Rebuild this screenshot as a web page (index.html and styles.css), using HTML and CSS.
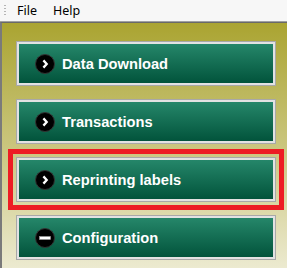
FILE: index.html
```html
<!DOCTYPE html>
<html lang="en">
<head>
    <meta charset="UTF-8">
    <title>Labels</title>
    <link rel="stylesheet" href="styles.css">
</head>
<body>
<div class="menubar">
    <span class="grip"></span>
    <span class="menu-item">File</span>
    <span class="menu-item">Help</span>
</div>

<div class="panel">
    <div class="nav-button">
        <span class="icon">
            <svg width="20" height="20" viewBox="0 0 20 20"><circle cx="10" cy="10" r="9.5" fill="#000" stroke="#333" stroke-width="1"/><path d="M8.4 6.4 L11.7 10 L8.4 13.6" fill="none" stroke="#fff" stroke-width="2.3"/></svg>
        </span>
        <span class="label">Data Download</span>
    </div>
    <div class="nav-button">
        <span class="icon">
            <svg width="20" height="20" viewBox="0 0 20 20"><circle cx="10" cy="10" r="9.5" fill="#000" stroke="#333" stroke-width="1"/><path d="M8.4 6.4 L11.7 10 L8.4 13.6" fill="none" stroke="#fff" stroke-width="2.3"/></svg>
        </span>
        <span class="label">Transactions</span>
    </div>
    <div class="nav-button highlighted">
        <span class="icon">
            <svg width="20" height="20" viewBox="0 0 20 20"><circle cx="10" cy="10" r="9.5" fill="#000" stroke="#333" stroke-width="1"/><path d="M8.4 6.4 L11.7 10 L8.4 13.6" fill="none" stroke="#fff" stroke-width="2.3"/></svg>
        </span>
        <span class="label">Reprinting labels</span>
    </div>
    <div class="nav-button">
        <span class="icon">
            <svg width="20" height="20" viewBox="0 0 20 20"><circle cx="10" cy="10" r="9.5" fill="#000" stroke="#333" stroke-width="1"/><rect x="4.5" y="8.5" width="11" height="3" fill="#fff" stroke="#999" stroke-width="0.6"/></svg>
        </span>
        <span class="label">Configuration</span>
    </div>
</div>
</body>
</html>
```
FILE: styles.css
```css
html, body {
    margin: 0;
    padding: 0;
    background-color: #f0f0f0;
    overflow: hidden;
}

.menubar {
    height: 21px;
    display: flex;
    align-items: center;
    background-color: #f7f7f7;
    border-bottom: 1px solid #a0a0a0;
    font-family: "Noto Sans", "Liberation Sans", sans-serif;
    font-size: 12.5px;
    color: #000;
}

.grip {
    width: 2px;
    height: 12px;
    margin-left: 4px;
    margin-right: 11px;
    background-image: linear-gradient(#b5b5b5 50%, transparent 50%);
    background-size: 2px 3px;
}

.menu-item {
    margin-right: 16px;
}

.panel {
    height: 246px;
    width: 300px;
    padding: 18px 0 0 14px;
    border-top: 1px solid #696969;
    border-left: 2px solid #7a7a7a;
    box-sizing: border-box;
    background: linear-gradient(#aaa431, #cdc985 55%, #ecead0);
}

.nav-button {
    width: 260px;
    height: 45px;
    box-sizing: border-box;
    margin-bottom: 13px;
    padding-left: 18px;
    display: flex;
    align-items: center;
    border: 1px solid #a8a8a8;
    box-shadow: inset 0 0 0 2px #e2e2e2;
    background: linear-gradient(#27896c, #005139);
    cursor: pointer;
}

.highlighted {
    outline: 5px solid #ed1c24;
    outline-offset: 3px;
}

.icon {
    width: 20px;
    height: 20px;
    margin-right: 7px;
    display: flex;
}

.label {
    font-family: "Liberation Sans", Arial, sans-serif;
    font-weight: bold;
    font-size: 14.7px;
    color: #fff;
    padding-top: 1px;
}
```
